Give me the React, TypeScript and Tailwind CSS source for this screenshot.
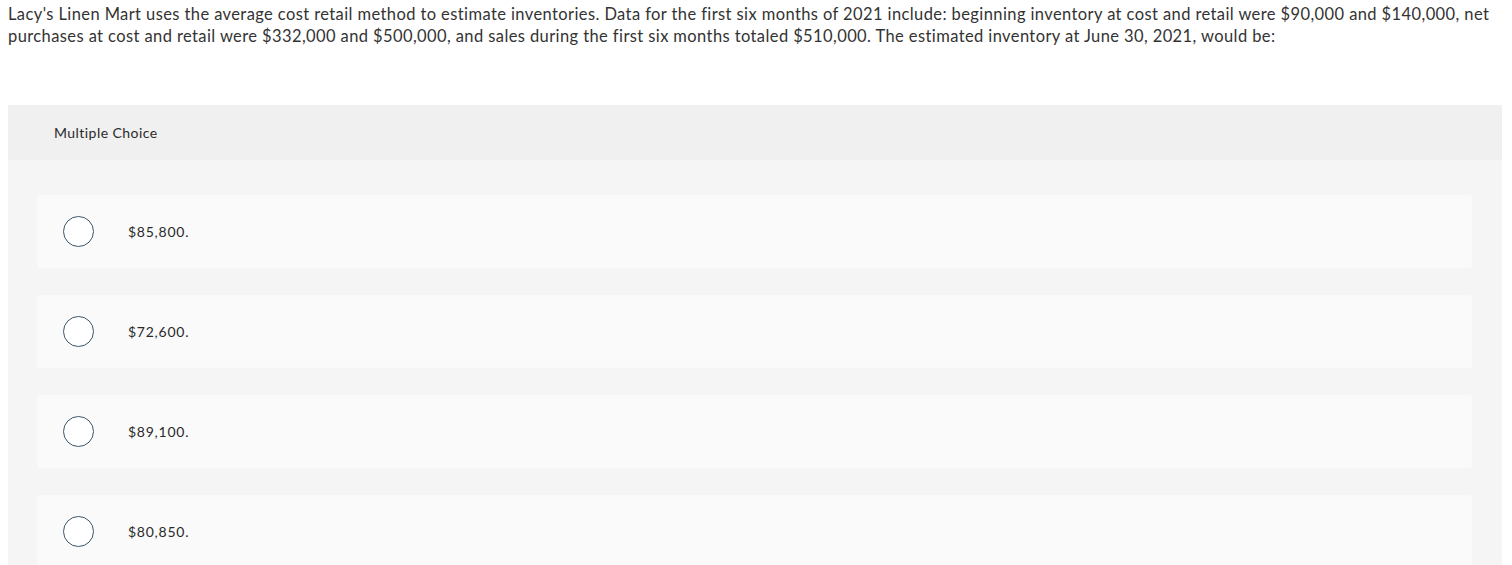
const options = ['$85,800.', '$72,600.', '$89,100.', '$80,850.'];

export default function App() {
  return (
    <div className="min-h-[565px] bg-white text-[#333] font-['Lato','Liberation_Sans',sans-serif]">
      <div className="px-2 pt-[3px] text-[16.5px] leading-[22px] tracking-[0.4px]">
        Lacy's Linen Mart uses the average cost retail method to estimate inventories. Data for the first six months of 2021 include: beginning inventory at cost and retail were $90,000 and $140,000, net
        <br />
        purchases at cost and retail were $332,000 and $500,000, and sales during the first six months totaled $510,000. The estimated inventory at June 30, 2021, would be:
      </div>

      <div className="mt-[58px] ml-2 mr-[10px] bg-[#f5f5f5]">
        <div className="h-[55px] bg-[#f0f0f0] pl-[46px] flex items-center text-[14px] tracking-[0.45px] text-[#2a2a2a]">
          Multiple Choice
        </div>
        <div className="pt-[35px] pl-[29px] pr-[30px] flex flex-col gap-[27px]">
          {options.map((o) => (
            <div key={o} className="h-[73px] bg-[#fafafa] rounded-sm flex items-center">
              <span className="ml-[26px] w-[31px] h-[31px] rounded-full border-[1.5px] border-[#3b5569] bg-white" />
              <span className="ml-[34px] text-[14px] tracking-[0.75px] text-[#2a2a2a]">{o}</span>
            </div>
          ))}
        </div>
      </div>
    </div>
  );
}
